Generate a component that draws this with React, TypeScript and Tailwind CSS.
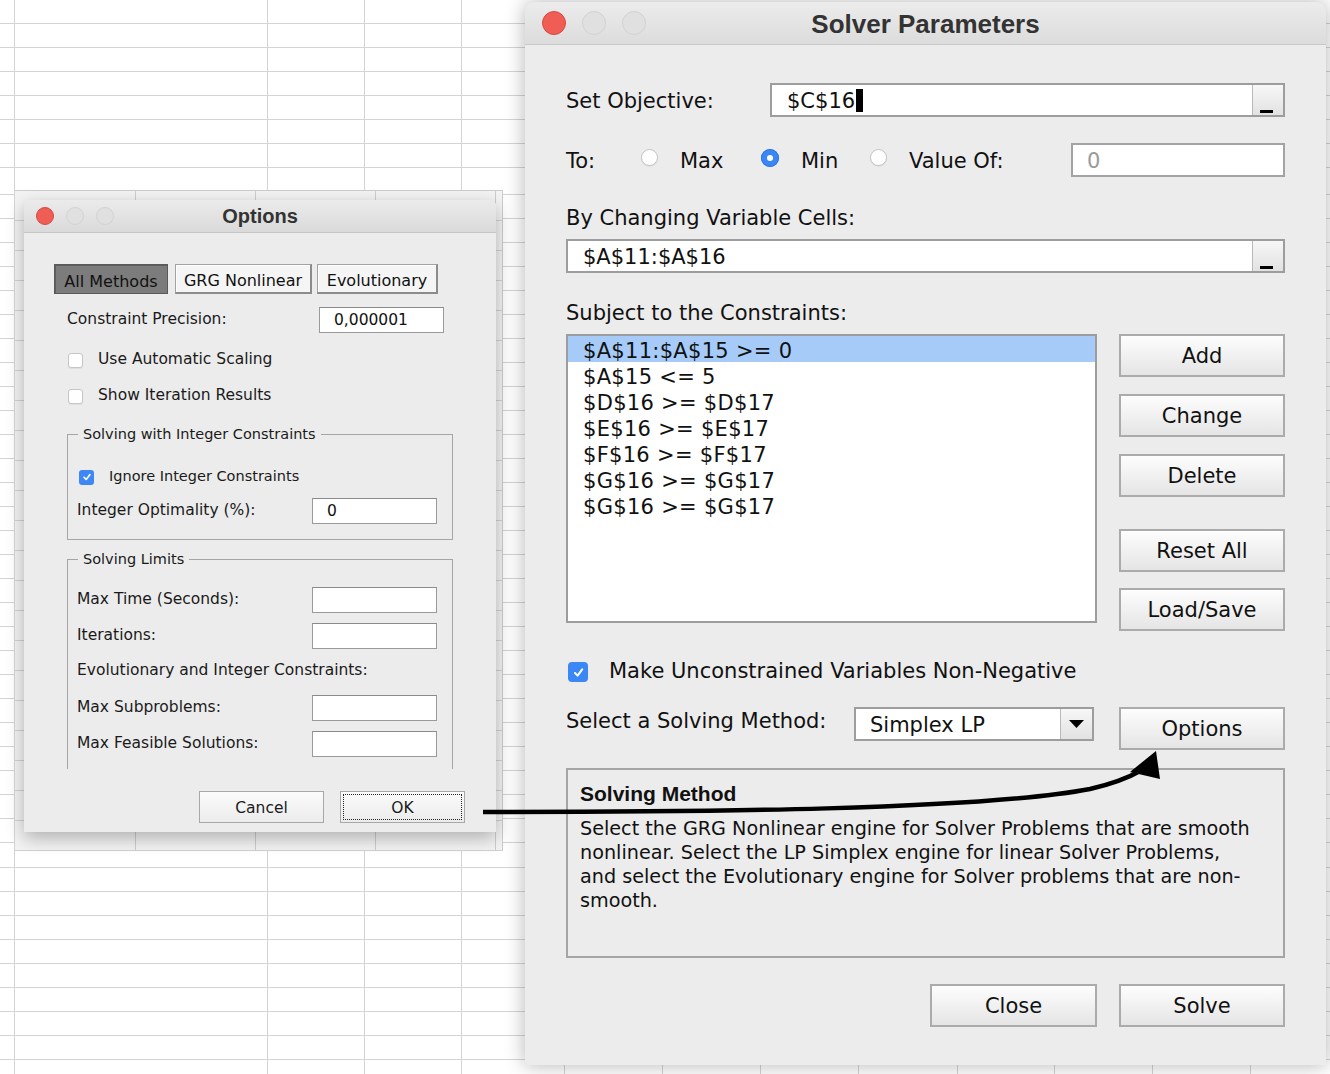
import React from "react";

// Lucida Grande stand-in for the Java/mac dialogs
const UI = "font-['DejaVu_Sans','Liberation_Sans',sans-serif]";
const HEAD = "font-['Liberation_Sans',Arial,sans-serif]";

const GRID24 = "bg-[linear-gradient(to_bottom,transparent_23px,#d4d4d4_23px)] bg-[length:100%_24px]";
const GRID30 = "bg-[linear-gradient(to_bottom,transparent_29px,#d2d2d2_29px)] bg-[length:100%_30px]";

function Lights({ size }: { size: "sm" | "lg" }) {
  const dot = size === "lg" ? "h-[24px] w-[24px]" : "h-[18px] w-[18px]";
  const gap = size === "lg" ? "gap-[16px] pl-[17px]" : "gap-[12px] pl-[12px]";
  return (
    <div className={`flex items-center ${gap}`}>
      <span className={`${dot} rounded-full border border-[#d9483f] bg-[#ef5d55]`} />
      <span className={`${dot} rounded-full border border-[#d2d2d2] bg-[#e0e0e0]`} />
      <span className={`${dot} rounded-full border border-[#d2d2d2] bg-[#e0e0e0]`} />
    </div>
  );
}

function SmallCheck({ checked }: { checked?: boolean }) {
  if (checked)
    return (
      <span className="flex h-[15px] w-[15px] shrink-0 items-center justify-center rounded-[3px] bg-[#3f87f5]">
        <svg width="10" height="10" viewBox="0 0 10 10">
          <path d="M2 5.2 L4.2 7.4 L8 2.6" fill="none" stroke="#fff" strokeWidth="1.6" strokeLinecap="round" strokeLinejoin="round" />
        </svg>
      </span>
    );
  return <span className="h-[15px] w-[15px] shrink-0 rounded-[3px] border border-[#c6c6c6] bg-white shadow-[0_1px_1px_rgba(0,0,0,0.06)]" />;
}

function OptField({ value }: { value?: string }) {
  return (
    <div className="flex h-[26px] w-[125px] items-center border border-[#9a9a9a] border-t-[#8a8a8a] bg-white pl-[14px] pt-[2px] text-[15.5px] text-[#111]">
      {value}
    </div>
  );
}

function OptRow({ label, value }: { label: string; value?: string }) {
  return (
    <div className="flex h-[26px] items-center pl-[9px]">
      <span className="w-[235px]">{label}</span>
      <OptField value={value} />
    </div>
  );
}

function Tab({ label, selected, className }: { label: string; selected?: boolean; className: string }) {
  const look = selected
    ? "border border-[#5a5a5a] bg-[#7c7c7c] shadow-[inset_1px_1px_0_#5e5e5e]"
    : "border border-[#a2a2a2] border-r-2 border-b-2 border-r-[#8c8c8c] border-b-[#8c8c8c] bg-[#f5f5f5] shadow-[inset_1px_1px_0_#ffffff]";
  return (
    <div className={`flex h-[30px] items-center justify-center pt-[5px] text-[16px] text-[#111] ${look} ${className}`}>
      {label}
    </div>
  );
}

function OptionsDialog() {
  return (
    <div className={`absolute left-[24px] top-[200px] h-[632px] w-[472px] rounded-t-[6px] bg-[#ececec] shadow-[0_6px_18px_rgba(0,0,0,0.28)] ${UI} text-[15.5px] text-[#1a1a1a]`}>
      <div className="grid h-[33px] grid-cols-[1fr_auto_1fr] items-center rounded-t-[6px] border-b border-[#c6c6c6] bg-linear-to-b from-[#ebebeb] to-[#dadada]">
        <Lights size="sm" />
        <span className={`${HEAD} text-[20px] font-bold text-[#333]`}>Options</span>
        <span />
      </div>
      <div className="flex flex-col px-[30px] pt-[31px]">
        <div className="flex">
          <Tab label="All Methods" selected className="w-[114px]" />
          <Tab label="GRG Nonlinear" className="ml-[7px] w-[137px]" />
          <Tab label="Evolutionary" className="ml-[5px] w-[121px]" />
        </div>
        <div className="mt-[13px] flex h-[26px] items-center pl-[13px]">
          <span className="w-[252px]">Constraint Precision:</span>
          <OptField value="0,000001" />
        </div>
        <div className="mt-[17px] flex h-[20px] items-center pl-[14px]">
          <SmallCheck />
          <span className="ml-[15px]">Use Automatic Scaling</span>
        </div>
        <div className="mt-[16px] flex h-[20px] items-center pl-[14px]">
          <SmallCheck />
          <span className="ml-[15px]">Show Iteration Results</span>
        </div>

        <fieldset className="ml-[13px] mt-[19px] w-[386px] border border-[#a5a5a5] pb-[15px]">
          <legend className="ml-[10px] px-[5px] text-[14.5px] leading-[18px]">Solving with Integer Constraints</legend>
          <div className="mt-[24px] flex h-[20px] items-center pl-[11px]">
            <SmallCheck checked />
            <span className="ml-[15px] text-[14.5px]">Ignore Integer Constraints</span>
          </div>
          <div className="mt-[11px]">
            <OptRow label="Integer Optimality (%):" value="0" />
          </div>
        </fieldset>

        <fieldset className="ml-[13px] mt-[10px] w-[386px] border border-b-0 border-[#a5a5a5] pb-[12px]">
          <legend className="ml-[10px] px-[5px] text-[14.5px] leading-[18px]">Solving Limits</legend>
          <div className="mt-[19px]">
            <OptRow label="Max Time (Seconds):" />
          </div>
          <div className="mt-[10px]">
            <OptRow label="Iterations:" />
          </div>
          <div className="mt-[12px] flex h-[20px] items-center pl-[9px]">Evolutionary and Integer Constraints:</div>
          <div className="mt-[14px]">
            <OptRow label="Max Subproblems:" />
          </div>
          <div className="mt-[10px]">
            <OptRow label="Max Feasible Solutions:" />
          </div>
        </fieldset>

        <div className="mt-[22px] flex justify-end gap-[16px] pr-[1px]">
          <div className="flex h-[32px] w-[125px] items-center justify-center border border-[#a8a8a8] bg-linear-to-b from-[#fbfbfb] to-[#ececec] pt-[3px]">
            Cancel
          </div>
          <div className="flex h-[32px] w-[125px] border border-[#a8a8a8] bg-linear-to-b from-[#fbfbfb] to-[#ececec] p-[2px]">
            <span className="flex flex-1 items-center justify-center border border-dotted border-[#222] pt-[3px]">OK</span>
          </div>
        </div>
      </div>
    </div>
  );
}

function RefInput({ value, cursor }: { value: string; cursor?: boolean }) {
  return (
    <div className="flex h-[34px] flex-1 items-stretch border-2 border-[#9d9d9d] bg-white">
      <div className="flex flex-1 items-center pl-[15px] pt-[3px]">
        {value}
        {cursor && <span className="ml-[1px] mb-[3px] inline-block h-[23px] w-[7px] bg-black" />}
      </div>
      <div className="flex w-[31px] items-end justify-center border-l border-[#b9b9b9] bg-linear-to-b from-[#f7f7f7] to-[#e2e2e2] pb-[2px] pr-[4px]">
        <span className="h-[3px] w-[13px] bg-black" />
      </div>
    </div>
  );
}

function Radio({ checked }: { checked?: boolean }) {
  if (checked)
    return (
      <span className="mb-[5px] flex h-[18px] w-[18px] shrink-0 items-center justify-center rounded-full bg-[#3a86f7] shadow-[inset_0_0_0_1px_#2f74e0]">
        <span className="h-[6px] w-[6px] rounded-full bg-white" />
      </span>
    );
  return <span className="mb-[5px] h-[17px] w-[17px] shrink-0 rounded-full border border-[#c3c3c3] bg-white shadow-[0_1px_1px_rgba(0,0,0,0.06)]" />;
}

function Btn({ label, className }: { label: string; className: string }) {
  return (
    <div className={`flex h-[43px] items-center justify-center border-2 border-[#ababab] bg-linear-to-b from-[#fdfdfd] to-[#e5e5e5] pt-[3px] ${className}`}>
      {label}
    </div>
  );
}

const CONSTRAINTS = [
  "$A$11:$A$15 >= 0",
  "$A$15 <= 5",
  "$D$16 >= $D$17",
  "$E$16 >= $E$17",
  "$F$16 >= $F$17",
  "$G$16 >= $G$17",
  "$G$16 >= $G$17",
];

function SolverWindow() {
  return (
    <div className={`absolute left-[525px] top-[2px] h-[1063px] w-[801px] rounded-t-[10px] bg-[#ececec] shadow-[0_0_20px_rgba(0,0,0,0.3)] ${UI} text-[21px] text-[#111]`}>
      <div className="grid h-[43px] grid-cols-[1fr_auto_1fr] items-center rounded-t-[10px] border-b border-[#c8c8c8] bg-linear-to-b from-[#ececec] to-[#dcdcdc]">
        <Lights size="lg" />
        <span className={`${HEAD} pt-[2px] text-[26px] font-bold text-[#333]`}>Solver Parameters</span>
        <span />
      </div>

      <div className="flex flex-col px-[41px] pt-[38px]">
        <div className="flex h-[34px] items-center">
          <span className="w-[204px] pt-[4px]">Set Objective:</span>
          <RefInput value="$C$16" cursor />
        </div>

        <div className="mt-[26px] flex h-[34px] items-center">
          <span className="w-[75px] pt-[4px]">To:</span>
          <Radio />
          <span className="ml-[22px] w-[81px] pt-[4px]">Max</span>
          <Radio checked />
          <span className="ml-[22px] w-[69px] pt-[4px]">Min</span>
          <Radio />
          <span className="ml-[22px] flex-1 pt-[4px]">Value Of:</span>
          <div className="flex h-[34px] w-[214px] items-center border-2 border-[#a3a3a3] bg-white pl-[14px] pt-[3px] text-[#9a9a9a]">0</div>
        </div>

        <div className="mt-[27px] h-[26px] pt-[1px] leading-[26px]">By Changing Variable Cells:</div>
        <div className="mt-[9px] flex">
          <RefInput value="$A$11:$A$16" />
        </div>

        <div className="mt-[26px] h-[26px] pt-[1px] leading-[26px]">Subject to the Constraints:</div>
        <div className="mt-[9px] flex gap-[22px]">
          <div className="h-[289px] w-[531px] border-2 border-[#9d9d9d] bg-white">
            {CONSTRAINTS.map((c, i) => (
              <div
                key={i}
                className={`h-[26px] whitespace-pre pl-[15px] pt-[2px] leading-[26px] tracking-[0.3px] ${i === 0 ? "bg-[#a6cbf9]" : ""}`}
              >
                {c}
              </div>
            ))}
          </div>
          <div className="flex w-[166px] flex-col">
            <Btn label="Add" className="" />
            <Btn label="Change" className="mt-[17px]" />
            <Btn label="Delete" className="mt-[17px]" />
            <Btn label="Reset All" className="mt-[32px]" />
            <Btn label="Load/Save" className="mt-[16px]" />
          </div>
        </div>

        <div className="mt-[29px] flex h-[24px] items-center">
          <span className="ml-[2px] flex h-[20px] w-[20px] items-center justify-center rounded-[4px] bg-[#3b87f6]">
            <svg width="13" height="13" viewBox="0 0 13 13">
              <path d="M3 7 L5.6 9.6 L10.2 3.4" fill="none" stroke="#fff" strokeWidth="2" strokeLinecap="round" strokeLinejoin="round" />
            </svg>
          </span>
          <span className="ml-[21px]">Make Unconstrained Variables Non-Negative</span>
        </div>

        <div className="mt-[23px] flex items-start">
          <span className="w-[288px] pt-[1px] leading-[26px]">Select a Solving Method:</span>
          <div className="flex h-[34px] w-[240px] items-stretch border-2 border-[#9d9d9d] bg-white">
            <span className="flex flex-1 items-center pl-[14px] pt-[3px]">Simplex LP</span>
            <span className="flex w-[32px] items-center justify-center border-l border-[#b9b9b9] bg-linear-to-b from-[#f7f7f7] to-[#e2e2e2]">
              <svg width="15" height="8" viewBox="0 0 15 8">
                <path d="M0 0 H15 L7.5 8 Z" fill="#000" />
              </svg>
            </span>
          </div>
          <Btn label="Options" className="ml-[25px] h-[42px] w-[166px]" />
        </div>

        <div className="mt-[18px] h-[190px] border-2 border-[#a5a5a5] px-[12px] pt-[11px]">
          <div className={`${HEAD} h-[26px] text-[21px] font-bold leading-[26px]`}>Solving Method</div>
          <p className="mt-[10px] text-[19.2px] leading-[24px]">
            <span className="block whitespace-nowrap">Select the GRG Nonlinear engine for Solver Problems that are smooth</span>
            <span className="block whitespace-nowrap">nonlinear. Select the LP Simplex engine for linear Solver Problems,</span>
            <span className="block whitespace-nowrap">and select the Evolutionary engine for Solver problems that are non-</span>
            <span className="block whitespace-nowrap">smooth.</span>
          </p>
        </div>

        <div className="mt-[26px] flex justify-end gap-[22px]">
          <Btn label="Close" className="h-[42px] w-[167px]" />
          <Btn label="Solve" className="h-[42px] w-[166px]" />
        </div>
      </div>
    </div>
  );
}

function Col({ className }: { className: string }) {
  return <div className={`h-full shrink-0 border-r border-[#d4d4d4] ${className}`} />;
}

export default function App() {
  return (
    <div className="relative flex h-[1074px] w-[1330px] flex-col overflow-hidden bg-white">
      {/* spreadsheet behind the dialogs */}
      <div className={`flex h-[190px] shrink-0 ${GRID24}`}>
        <Col className="w-[15px]" />
        <Col className="w-[253px]" />
        <Col className="w-[97px]" />
        <Col className="w-[97px]" />
        <div className="flex-1" />
      </div>

      <div className="flex h-[661px] shrink-0">
        <div className={`h-full w-[15px] shrink-0 border-r border-[#d4d4d4] ${GRID24} bg-[position:0_5px]`} />
        <div className={`flex h-full w-[488px] shrink-0 border-t border-[#cccccc] bg-[#f3f3f3] ${GRID30}`}>
          <div className="h-full w-[121px] shrink-0 border-r border-[#cdcdcd]" />
          <div className="h-full w-[120px] shrink-0 border-r border-[#cdcdcd]" />
          <div className="h-full w-[120px] shrink-0 border-r border-[#cdcdcd]" />
          <div className="h-full w-[120px] shrink-0 border-r border-[#cdcdcd]" />
          <div className="h-full w-[7px] shrink-0 border-r border-[#cdcdcd]" />
        </div>
        <div className={`h-full flex-1 ${GRID24} bg-[position:0_5px]`} />
      </div>

      <div className={`flex flex-1 ${GRID24} bg-[position:0_-7px]`}>
        <Col className="w-[15px]" />
        <Col className="w-[253px]" />
        <Col className="w-[97px]" />
        <Col className="w-[97px]" />
        <Col className="w-[103px]" />
        <Col className="w-[98px]" />
        <Col className="w-[98px]" />
        <Col className="w-[98px]" />
        <Col className="w-[99px]" />
        <Col className="w-[97px]" />
        <Col className="w-[98px]" />
        <Col className="w-[98px]" />
        <div className="flex-1" />
      </div>

      <OptionsDialog />
      <SolverWindow />

      {/* hand-drawn arrow from OK to Options */}
      <svg className="pointer-events-none absolute left-0 top-0" width="1330" height="1074" viewBox="0 0 1330 1074">
        <path d="M483 812 C 700 812, 980 810, 1090 789 C 1112 784, 1128 778, 1142 770" fill="none" stroke="#000" strokeWidth="4.5" />
        <path d="M1156 751 L1130 772 L1160 779 Z" fill="#000" />
      </svg>
    </div>
  );
}
